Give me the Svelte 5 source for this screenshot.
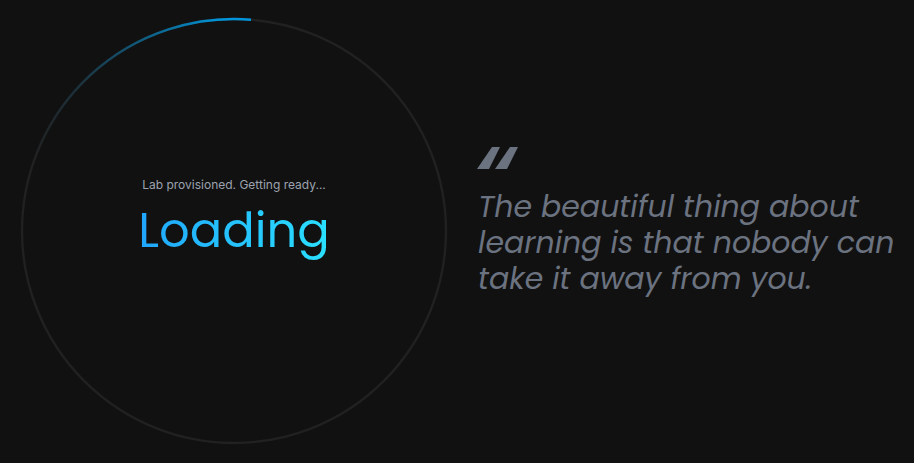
<script>
  const status = 'Lab provisioned. Getting ready...';
  const lines = ['The beautiful thing about', 'learning is that nobody can', 'take it away from you.'];
</script>

<main>
  <section class="loader" role="status">
    <svg class="ring" viewBox="0 0 426 426" fill="none" aria-hidden="true">
      <defs>
        <linearGradient id="sweep" gradientUnits="userSpaceOnUse" x1="12" y1="0" x2="200" y2="0">
          <stop offset="0" stop-color="#008fd0" stop-opacity="0" />
          <stop offset="0.25" stop-color="#008fd0" stop-opacity="0.16" />
          <stop offset="1" stop-color="#0095da" />
        </linearGradient>
      </defs>
      <circle cx="213" cy="213" r="212" stroke="#212121" stroke-width="2.4" />
      <path d="M1 213A212 212 0 0 1 230 1.7" stroke="url(#sweep)" stroke-width="2.4" />
    </svg>
    <div class="message">
      <p>{status}</p>
      <h1>Loading</h1>
    </div>
  </section>

  <blockquote>
    <svg class="mark" width="41" height="22" viewBox="0 0 41 22" fill="#6b7280" aria-hidden="true">
      <path d="M14 0H22L11 22H-1Z" />
      <path d="M32 0H40L29 22H17Z" />
    </svg>
    <p>
      {#each lines as line}<span>{line}</span>{/each}
    </p>
  </blockquote>
</main>

<style>
  :global(body) {
    margin: 0;
    background: #111111;
  }
  main {
    box-sizing: border-box;
    min-height: 100vh;
    display: grid;
    grid-template-columns: minmax(0, 1fr) minmax(0, 1fr);
    align-items: center;
    gap: 31px;
    padding: 0 10px 2px 21px;
    background: #111111;
    font-family: Poppins, Inter, sans-serif;
  }
  .loader {
    display: grid;
    place-items: center;
  }
  .ring,
  .message {
    grid-area: 1 / 1;
  }
  .ring {
    display: block;
    width: 100%;
    overflow: visible;
  }
  .message {
    text-align: center;
    padding-bottom: 20px;
  }
  .message p {
    margin: 0;
    font: 400 12px/16px Inter, sans-serif;
    color: #9ca3af;
  }
  h1 {
    margin: 6px 0 2px;
    font-size: 48px;
    line-height: 64px;
    font-weight: 400;
    color: transparent;
    background: linear-gradient(90deg, #20a6fc, #2ae0ff);
    background-clip: text;
  }
  blockquote {
    margin: 0;
    padding-bottom: 18px;
  }
  .mark {
    display: block;
    overflow: visible;
  }
  blockquote p {
    margin: 20px 0 0;
    font-size: 30px;
    line-height: 36px;
    font-style: italic;
    font-weight: 400;
    color: #6b7280;
    white-space: nowrap;
  }
  blockquote span {
    display: block;
  }
</style>
